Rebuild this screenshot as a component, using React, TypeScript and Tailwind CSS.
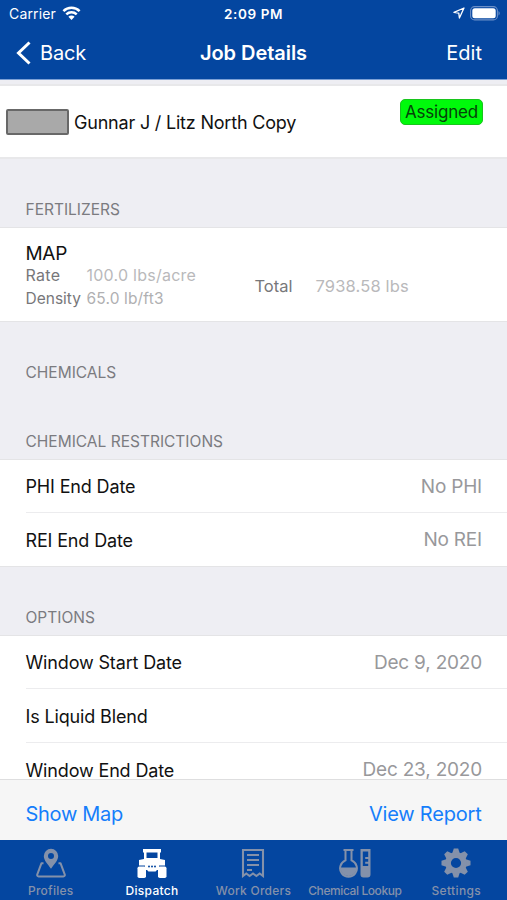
import type { ReactNode } from "react";

type Row = { label: string; value?: string };

const restrictions: Row[] = [
  { label: "PHI End Date", value: "No PHI" },
  { label: "REI End Date", value: "No REI" },
];

const options: Row[] = [
  { label: "Window Start Date", value: "Dec 9, 2020" },
  { label: "Is Liquid Blend" },
  { label: "Window End Date", value: "Dec 23, 2020" },
];

function StatusBar() {
  return (
    <div className="relative h-7 flex items-center justify-between pl-[9px] pr-[7px]">
      <div className="flex items-center gap-[6px]">
        <span className="text-[14px] leading-[18px] tracking-[0.15px]">Carrier</span>
        <svg className="-mt-0.5" width="19" height="14" viewBox="0 0 18 14" fill="none" stroke="currentColor" strokeWidth="2.5">
          <path d="M0.9 5.2a11.5 11.5 0 0 1 16.2 0" />
          <path d="M3.8 8.3a7.4 7.4 0 0 1 10.4 0" />
          <path d="M9 13.9 5.9 10.7a4.4 4.4 0 0 1 6.2 0z" fill="currentColor" stroke="none" />
        </svg>
      </div>
      <span className="absolute left-1/2 -translate-x-1/2 text-[13.5px] font-semibold tracking-[0.6px] whitespace-nowrap">
        2:09 PM
      </span>
      <div className="flex items-center gap-[5px] -mt-0.5">
        <svg width="12" height="12" viewBox="0 0 12 12" fill="none" stroke="currentColor" strokeWidth="1.3" strokeLinejoin="round">
          <path d="M11 1 1 5.4l4.8.8.6 4.8z" />
        </svg>
        <svg width="30" height="15" viewBox="0 0 30 15">
          <rect x="0.6" y="0.6" width="26.8" height="13.3" rx="4" fill="none" stroke="#6b8fc7" strokeWidth="1.1" />
          <rect x="2.3" y="2.3" width="23.4" height="9.9" rx="2.5" fill="#fff" />
          <path d="M28.5 5v4.6c1.6-.8 1.6-3.8 0-4.6z" fill="#6b8fc7" />
        </svg>
      </div>
    </div>
  );
}

function NavBar() {
  return (
    <div className="grid grid-cols-3 items-center h-[49px] pl-4 pr-[25px] text-[20px]">
      <button className="flex items-center gap-[9px] text-left tracking-[-0.2px]">
        <svg width="15" height="24" viewBox="0 0 15 24" fill="none" stroke="currentColor" strokeWidth="3">
          <path d="M13.5 1.5 2.5 12l11 10.5" />
        </svg>
        Back
      </button>
      <h1 className="text-center font-semibold whitespace-nowrap text-[20px] tracking-[-0.05px] pl-[9px]">Job Details</h1>
      <button className="text-right">Edit</button>
    </div>
  );
}

function SectionTitle({ children, className }: { children: ReactNode; className: string }) {
  return (
    <h2 className={`flex items-end px-[25.5px] pb-[7px] text-[15.5px] leading-[20px] text-[#7b7b80] ${className}`}>
      {children}
    </h2>
  );
}

function Rows({ rows }: { rows: Row[] }) {
  return (
    <div className="bg-white border-y border-[#e4e4e6] pl-[25.5px]">
      {rows.map((row, i) => (
        <div
          key={row.label}
          className={`flex items-center justify-between pr-[25px] pt-px text-[18px] ${
            i === 0 ? "h-[53px] border-b border-[#ececee]" : i < rows.length - 1 ? "h-[54px] border-b border-[#ececee]" : "h-[53px]"
          }`}
        >
          <span className="text-[#111] tracking-[-0.15px]">{row.label}</span>
          <span className="text-[#98989b] text-[19px] tracking-[-0.2px] pt-px">{row.value}</span>
        </div>
      ))}
    </div>
  );
}

function ProfilesIcon() {
  return (
    <svg width="30" height="30" viewBox="0 0 30 30" fill="none" stroke="currentColor" strokeWidth="2" strokeLinejoin="round">
      <path
        d="M15 .8A7.2 7.2 0 0 0 7.8 8c0 4.7 4.3 8.3 7.2 12.8 2.9-4.5 7.2-8.1 7.2-12.8A7.2 7.2 0 0 0 15 .8zm0 4.2a3 3 0 1 1 0 6 3 3 0 0 1 0-6z"
        fill="currentColor"
        fillRule="evenodd"
        stroke="none"
      />
      <path d="M7.5 15.2H5.5L1.3 26.3c-.4 1.2.2 2.2 1.3 2.2h24.8c1.1 0 1.7-1 1.3-2.2l-4.2-11.1h-2" />
    </svg>
  );
}

function DispatchIcon() {
  return (
    <svg width="30" height="30" viewBox="0 0 30 30" fill="currentColor">
      <path
        fillRule="evenodd"
        d="M6 1h18v3.5h-1V11l5 1v5.5H22V22h-2l-1.500 1.500h-7L10 22H8v-4.500H2V12l5-1V4.500H6zm3.500 3.500v5.500h11V4.500z"
      />
      <rect x="0.500" y="18.500" width="8.500" height="11.500" rx="1.800" />
      <rect x="21" y="18.500" width="8.500" height="11.500" rx="1.800" />
      <g className="fill-[#0446a0]">
        <circle cx="12" cy="18.500" r="1" />
        <circle cx="15" cy="18.500" r="1" />
        <circle cx="18" cy="18.500" r="1" />
      </g>
    </svg>
  );
}

function WorkOrdersIcon() {
  return (
    <svg width="30" height="30" viewBox="0 0 30 30" fill="none" stroke="currentColor" strokeWidth="2.1">
      <path d="M5 28V2h20v26l-3.300-2.500-3.300 2.500-3.400-2.500-3.400 2.500-3.300-2.500z" />
      <path d="M9 7h12M9 12h12M9 17h12M9 22h5" />
    </svg>
  );
}

function ChemicalIcon() {
  return (
    <svg width="32" height="30" viewBox="0 0 32 30" fill="none" stroke="currentColor" strokeWidth="2">
      <path d="M4.5 2h10M6.500 2v10.400a8.400 8.400 0 1 0 6 0V2" />
      <path d="M1.500 19.500h16a8 8 0 0 1-16 1z" fill="currentColor" stroke="none" />
      <path
        d="M21.500 1H31.500v25.500a3 3 0 0 1-3 3h-4a3 3 0 0 1-3-3zm2.300 2.500v14.500h5.400v-2.200h-3v-2h3v-2.800h-3V9h3V3.500z"
        fill="currentColor"
        fillRule="evenodd"
        stroke="none"
      />
    </svg>
  );
}

function SettingsIcon() {
  return (
    <svg width="30" height="30" viewBox="0 0 30 30">
      <g fill="currentColor">
        {[0, 45, 90, 135, 180, 225, 270, 315].map((deg) => (
          <path key={deg} d="M11 6 12.8 .5h4.400L19 6z" transform={`rotate(${deg} 15 15)`} />
        ))}
      </g>
      <circle cx="15" cy="15" r="7.900" fill="none" stroke="currentColor" strokeWidth="5.600" />
    </svg>
  );
}

const tabs = [
  { label: "Profiles", icon: <ProfilesIcon />, spacing: "tracking-[0.25px]" },
  { label: "Dispatch", icon: <DispatchIcon />, active: true, spacing: "tracking-[0.3px]" },
  { label: "Work Orders", icon: <WorkOrdersIcon />, spacing: "tracking-[0.25px]" },
  { label: "Chemical Lookup", icon: <ChemicalIcon />, spacing: "tracking-[-0.4px]" },
  { label: "Settings", icon: <SettingsIcon />, spacing: "tracking-[0.35px]" },
];

function TabBar() {
  return (
    <nav className="h-[60px] shrink-0 grid grid-cols-5 bg-[#0446a0]">
      {tabs.map((tab) => (
        <button
          key={tab.label}
          className={`flex flex-col items-center pt-2 ${tab.active ? "text-white" : "text-[#8491aa]"}`}
        >
          {tab.icon}
          <span className={`mt-[5px] text-[12px] leading-[16px] font-medium whitespace-nowrap ${tab.spacing}`}>
            {tab.label}
          </span>
        </button>
      ))}
    </nav>
  );
}

export default function App() {
  return (
    <div className="w-[507px] h-[900px] flex flex-col overflow-hidden bg-[#eeeef3] font-['Inter',sans-serif]">
      <header className="h-[80px] shrink-0 bg-[#0446a0] text-white border-b border-[#7ca0d6]">
        <StatusBar />
        <NavBar />
      </header>

      <main className="flex-1 min-h-0 overflow-hidden">
        {/* Job summary */}
        <div className="mt-1 h-[75px] flex items-center justify-between bg-white border-y-2 border-[#e8e8ea] pl-1.5 pr-6">
          <div className="flex items-center gap-[5px]">
            <div className="w-[63px] h-[26px] bg-[#a9a9a9] border-2 border-[#686868] rounded-[2px]" />
            <span className="text-[18px] tracking-[-0.2px] pt-0.5 text-[#111]">Gunnar J / Litz North Copy</span>
          </div>
          <span className="mb-[20px] w-[83px] h-[26px] flex items-center justify-center rounded-[5px] bg-[#00fa0b] border border-[#18c51c] pt-0.5 text-[17px] tracking-[-0.2px] text-[#06420a]">
            Assigned
          </span>
        </div>

        <SectionTitle className="h-[68px]">FERTILIZERS</SectionTitle>
        <div className="h-[95px] bg-white border-y border-[#e4e4e6] px-[25.5px] pt-[14px]">
          <h3 className="text-[19px] leading-[24px] tracking-[-0.3px] text-[#111]">MAP</h3>
          <div className="flex -mt-0.5 text-[16px] text-[#77777a]">
            <dl className="grid grid-cols-[61px_168px] leading-[23px]">
              <dt className="tracking-[0.3px]">Rate</dt>
              <dd className="text-[#b9b9bb] tracking-[0.25px]">100.0 lbs/acre</dd>
              <dt className="text-[15.5px]">Density</dt>
              <dd className="text-[15.5px] text-[#b0b0b2] tracking-[0.15px]">65.0 lb/ft3</dd>
            </dl>
            <dl className="grid grid-cols-[61px_auto] items-center text-[16.5px] -mt-0.5">
              <dt>Total</dt>
              <dd className="text-[#b9b9bb] tracking-[0.15px]">7938.58 lbs</dd>
            </dl>
          </div>
        </div>

        <SectionTitle className="h-[68px]">CHEMICALS</SectionTitle>
        <SectionTitle className="h-[69px]">CHEMICAL RESTRICTIONS</SectionTitle>
        <Rows rows={restrictions} />

        <SectionTitle className="h-[68px]">OPTIONS</SectionTitle>
        <Rows rows={options} />
      </main>

      <div className="h-[61px] shrink-0 flex items-center justify-between px-[25.5px] pt-[7px] bg-[#f6f6f6] border-t border-[#dededf] text-[20px] text-[#157efb]">
        <button className="tracking-[-0.3px]">Show Map</button>
        <button className="tracking-[-0.2px]">View Report</button>
      </div>
      <TabBar />
    </div>
  );
}
